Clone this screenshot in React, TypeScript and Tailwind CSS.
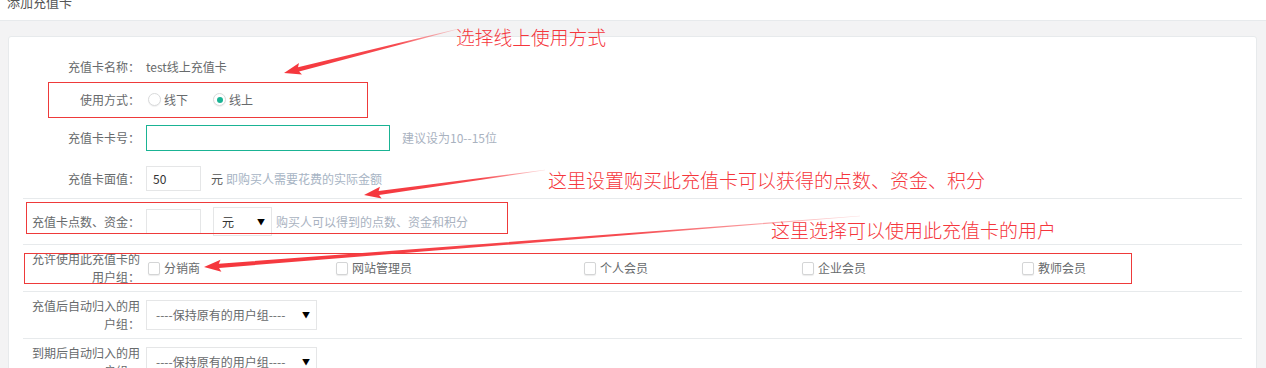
import React from 'react';

const font = { fontFamily: '"Noto Sans CJK SC", "Noto Sans", sans-serif' };

type Pt = [number, number];

function Arrow({ id, tail, tip }: { id: string; tail: Pt; tip: Pt }) {
  const [x1, y1] = tail;
  const [x2, y2] = tip;
  const len = Math.hypot(x2 - x1, y2 - y1);
  const ux = (x2 - x1) / len;
  const uy = (y2 - y1) / len;
  const nx = -uy;
  const ny = ux;
  const headLen = 15;
  const headW = 6;
  const shaftW = 2.1;
  const bx = x2 - ux * headLen;
  const by = y2 - uy * headLen;
  const p = (x: number, y: number) => `${x.toFixed(1)},${y.toFixed(1)}`;
  const pts = [
    p(x1 + nx * 0.3, y1 + ny * 0.3),
    p(bx + nx * shaftW, by + ny * shaftW),
    p(bx + nx * headW - ux * 2, by + ny * headW - uy * 2),
    p(x2, y2),
    p(bx - nx * headW - ux * 2, by - ny * headW - uy * 2),
    p(bx - nx * shaftW, by - ny * shaftW),
    p(x1 - nx * 0.3, y1 - ny * 0.3),
  ].join(' ');
  return (
    <g>
      <defs>
        <linearGradient id={id} gradientUnits="userSpaceOnUse" x1={x1} y1={y1} x2={x2} y2={y2}>
          <stop offset="0" stopColor="#f5363c" stopOpacity="0.15" />
          <stop offset="0.35" stopColor="#f5363c" stopOpacity="0.9" />
          <stop offset="1" stopColor="#f5363c" />
        </linearGradient>
      </defs>
      <polygon points={pts} fill={`url(#${id})`} />
    </g>
  );
}

function Label({ children }: { children: React.ReactNode }) {
  return <div className="w-[117px] shrink-0 text-right text-[12px] leading-[18px] text-[#676a6c]">{children}</div>;
}

function Radio({ checked }: { checked?: boolean }) {
  return (
    <span className="w-[13px] h-[13px] rounded-full border border-[#d9dadb] bg-white flex items-center justify-center shadow-[0_1px_1px_rgba(0,0,0,0.06)]">
      {checked && <span className="w-[6px] h-[6px] rounded-full bg-[#1ab394]" />}
    </span>
  );
}

function Checkbox() {
  return <span className="w-[12px] h-[13px] rounded-[2px] border border-[#d4d5d6] bg-white shadow-[0_1px_1px_rgba(0,0,0,0.08)]" />;
}

const groups = ['分销商', '网站管理员', '个人会员', '企业会员', '教师会员'];

export default function App() {
  return (
    <div className="relative w-[1266px] h-[368px] overflow-hidden bg-[#f3f3f4]" style={font}>
      <div className="h-[21px] bg-white border-b border-[#e7eaec] overflow-hidden">
        <div className="pl-[7px] -mt-[7px] text-[13px] leading-[18px] text-[#555]">添加充值卡</div>
      </div>

      <div className="ml-[8px] mr-[9px] mt-[15px] bg-white border border-[#e7eaec] rounded-[3px] h-[400px]">
        <div className="px-[14px] pt-[15px]">
          <div className="h-[30px] flex items-center">
            <Label>充值卡名称：</Label>
            <span className="ml-[6px] text-[12px] text-[#676a6c]">test线上充值卡</span>
          </div>

          <div className="h-[35px] flex items-center">
            <Label>使用方式：</Label>
            <div className="ml-[8px] flex items-center text-[12px] text-[#676a6c]">
              <Radio />
              <span className="ml-[3px]">线下</span>
              <span className="ml-[25px]" />
              <Radio checked />
              <span className="ml-[3px]">线上</span>
            </div>
          </div>

          <div className="h-[42px] flex items-center">
            <Label>充值卡卡号：</Label>
            <div className="ml-[6px] w-[244px] h-[26px] border border-[#1ab394] bg-white" />
            <span className="ml-[12px] text-[12px] text-[#a9b2bf]">建议设为10--15位</span>
          </div>

          <div className="h-[39px] flex items-center">
            <Label>充值卡面值：</Label>
            <div className="ml-[6px] w-[55px] h-[25px] border border-[#e5e6e7] bg-white flex items-center pl-[6px] text-[12px] text-[#333]">50</div>
            <span className="ml-[10px] text-[12px] text-[#555]">元</span>
            <span className="ml-[3px] text-[12px] text-[#a7b4c4]">即购买人需要花费的实际金额</span>
          </div>

          <div className="h-[46px] border-t border-[#e7eaec] flex items-center">
            <Label>充值卡点数、资金：</Label>
            <div className="ml-[6px] w-[55px] h-[25px] border border-[#e5e6e7] bg-white" />
            <div className="ml-[12px] w-[59px] h-[29px] border border-[#e5e6e7] bg-white flex items-center justify-between pl-[8px] pr-[6px] text-[12px] text-[#333]">
              <span>元</span>
              <span className="text-[8px] text-black">▼</span>
            </div>
            <span className="ml-[4px] text-[12px] text-[#a9b2bf]">购买人可以得到的点数、资金和积分</span>
          </div>

          <div className="h-[47px] border-t border-[#e7eaec] flex items-center">
            <Label>允许使用此充值卡的用户组：</Label>
            <div className="ml-[8px] grid grid-cols-[188px_248px_218px_220px_auto] text-[12px] text-[#676a6c]">
              {groups.map((g) => (
                <label key={g} className="flex items-center">
                  <Checkbox />
                  <span className="ml-[4px]">{g}</span>
                </label>
              ))}
            </div>
          </div>

          <div className="h-[47px] border-t border-[#e7eaec] flex items-center">
            <Label>充值后自动归入的用户组：</Label>
            <div className="ml-[6px] w-[171px] h-[30px] border border-[#e5e6e7] bg-white flex items-center justify-between pl-[9px] pr-[6px] text-[12px] text-[#676a6c]">
              <span>----保持原有的用户组----</span>
              <span className="text-[8px] text-black">▼</span>
            </div>
          </div>

          <div className="h-[47px] border-t border-[#e7eaec] flex items-center">
            <Label>到期后自动归入的用户组：</Label>
            <div className="ml-[6px] w-[171px] h-[30px] border border-[#e5e6e7] bg-white flex items-center justify-between pl-[9px] pr-[6px] text-[12px] text-[#676a6c]">
              <span>----保持原有的用户组----</span>
              <span className="text-[8px] text-black">▼</span>
            </div>
          </div>
        </div>
      </div>

      {/* annotations drawn over the page */}
      <svg className="absolute inset-0 pointer-events-none" width="1266" height="368">
        <rect x="48.5" y="82.5" width="319" height="35" fill="none" stroke="#ee3a3a" strokeWidth="1" />
        <rect x="26.5" y="202.5" width="481" height="31" fill="none" stroke="#ee3a3a" strokeWidth="1" />
        <rect x="24.5" y="253.5" width="1107" height="30" fill="none" stroke="#ee3a3a" strokeWidth="1" />
        <Arrow id="a1" tail={[458, 29]} tip={[284, 73]} />
        <Arrow id="a2" tail={[545, 170]} tip={[364, 195]} />
        <Arrow id="a3" tail={[860, 216]} tip={[204, 267]} />
      </svg>
      <span className="absolute left-[456px] top-[25px] text-[18.75px] leading-[24px] font-light text-[#f5363c] whitespace-nowrap">选择线上使用方式</span>
      <span className="absolute left-[548px] top-[168px] text-[19px] leading-[24px] font-light text-[#f5363c] whitespace-nowrap">这里设置购买此充值卡可以获得的点数、资金、积分</span>
      <span className="absolute left-[771px] top-[218px] text-[19px] leading-[24px] font-light text-[#f5363c] whitespace-nowrap">这里选择可以使用此充值卡的用户</span>
    </div>
  );
}
